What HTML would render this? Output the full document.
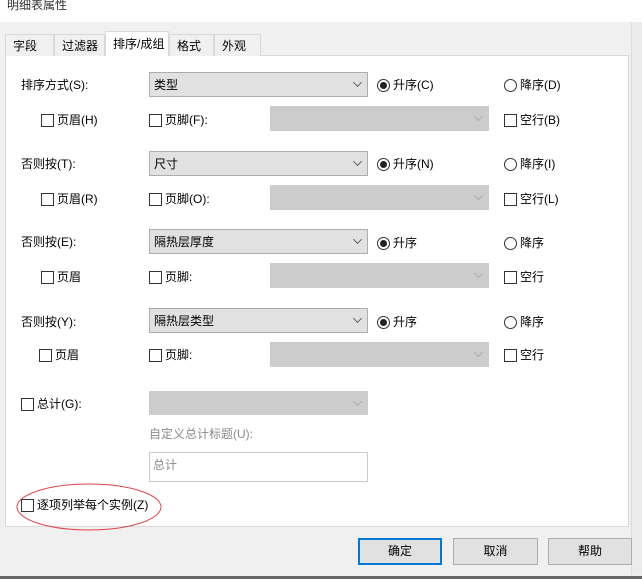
<!DOCTYPE html>
<html><head><meta charset="utf-8"><style>
*{box-sizing:border-box;margin:0;padding:0}
body{width:642px;height:579px;background:#f0f0f0;position:relative;overflow:hidden;font-family:"Liberation Sans","Noto Sans CJK SC",sans-serif;font-size:12px;color:#000}
.a{position:absolute;white-space:nowrap;line-height:14px}
.cb{position:absolute;width:13px;height:13px;border:1px solid #333;background:#fff}
.rb{position:absolute;width:13px;height:13px;border:1px solid #333;border-radius:50%;background:#fff}
.rb.on::after{content:"";position:absolute;left:2px;top:2px;width:7px;height:7px;border-radius:50%;background:#222}
.cmb{position:absolute;height:25px;border:1px solid #adadad;background:#e1e1e1;padding:5px 0 0 4px;line-height:14px}
.cmb.d{background:#cccccc;border-color:#cccccc}
.arr{position:absolute;right:6px;top:6px;width:7px;height:7px;border-right:1px solid #555;border-bottom:1px solid #555;transform:rotate(45deg) scale(.9)}
.d .arr{border-color:#aaa}
.tab{position:absolute;top:34px;height:22px;border:1px solid #d9d9d9;border-bottom:none;background:#f0f0f0;padding:4px 0 0 7px;line-height:14px}
.btn{position:absolute;top:538px;height:27px;border:1px solid #adadad;background:#e1e1e1;text-align:center;line-height:25px}
</style></head><body>
<div style="position:absolute;left:0;top:0;width:642px;height:22px;background:#fff"></div>
<div class="a" style="left:7px;top:-2px;color:#333">明细表属性</div>
<div style="position:absolute;left:631px;top:22px;width:11px;height:553px;background:#ececec;border-left:1px solid #ddd"></div>
<div style="position:absolute;left:5px;top:55px;width:624px;height:472px;background:#fff;border:1px solid #d9d9d9"></div>
<div class="tab" style="left:5px;width:49px">字段</div>
<div class="tab" style="left:54px;width:51px">过滤器</div>
<div class="tab" style="left:105px;width:64px;top:31px;height:25px;background:#fff;padding-top:5px">排序/成组</div>
<div class="tab" style="left:169px;width:45px">格式</div>
<div class="tab" style="left:214px;width:47px">外观</div>

<div class="a" style="left:21px;top:78px">排序方式(S):</div>
<div class="cmb" style="left:149px;top:72px;width:219px">类型<div class="arr"></div></div>
<div class="rb on" style="left:377px;top:79px"></div><div class="a" style="left:393px;top:78px">升序(C)</div>
<div class="rb" style="left:504px;top:79px"></div><div class="a" style="left:520px;top:78px">降序(D)</div>
<div class="cb" style="left:41px;top:114px"></div><div class="a" style="left:57px;top:113px">页眉(H)</div>
<div class="cb" style="left:149px;top:114px"></div><div class="a" style="left:165px;top:113px">页脚(F):</div>
<div class="cmb d" style="left:270px;top:106px;width:219px"><div class="arr"></div></div>
<div class="cb" style="left:504px;top:114px"></div><div class="a" style="left:520px;top:113px">空行(B)</div>

<div class="a" style="left:21px;top:157px">否则按(T):</div>
<div class="cmb" style="left:149px;top:151px;width:219px">尺寸<div class="arr"></div></div>
<div class="rb on" style="left:377px;top:158px"></div><div class="a" style="left:393px;top:157px">升序(N)</div>
<div class="rb" style="left:504px;top:158px"></div><div class="a" style="left:520px;top:157px">降序(I)</div>
<div class="cb" style="left:41px;top:193px"></div><div class="a" style="left:57px;top:192px">页眉(R)</div>
<div class="cb" style="left:149px;top:193px"></div><div class="a" style="left:165px;top:192px">页脚(O):</div>
<div class="cmb d" style="left:270px;top:185px;width:219px"><div class="arr"></div></div>
<div class="cb" style="left:504px;top:193px"></div><div class="a" style="left:520px;top:192px">空行(L)</div>

<div class="a" style="left:21px;top:235px">否则按(E):</div>
<div class="cmb" style="left:149px;top:229px;width:219px">隔热层厚度<div class="arr"></div></div>
<div class="rb on" style="left:377px;top:237px"></div><div class="a" style="left:393px;top:236px">升序</div>
<div class="rb" style="left:504px;top:237px"></div><div class="a" style="left:520px;top:236px">降序</div>
<div class="cb" style="left:41px;top:271px"></div><div class="a" style="left:57px;top:270px">页眉</div>
<div class="cb" style="left:149px;top:271px"></div><div class="a" style="left:165px;top:270px">页脚:</div>
<div class="cmb d" style="left:270px;top:263px;width:219px"><div class="arr"></div></div>
<div class="cb" style="left:504px;top:271px"></div><div class="a" style="left:520px;top:270px">空行</div>

<div class="a" style="left:21px;top:315px">否则按(Y):</div>
<div class="cmb" style="left:149px;top:308px;width:219px">隔热层类型<div class="arr"></div></div>
<div class="rb on" style="left:377px;top:316px"></div><div class="a" style="left:393px;top:315px">升序</div>
<div class="rb" style="left:504px;top:316px"></div><div class="a" style="left:520px;top:315px">降序</div>
<div class="cb" style="left:39px;top:349px"></div><div class="a" style="left:55px;top:348px">页眉</div>
<div class="cb" style="left:149px;top:349px"></div><div class="a" style="left:165px;top:348px">页脚:</div>
<div class="cmb d" style="left:270px;top:342px;width:219px"><div class="arr"></div></div>
<div class="cb" style="left:504px;top:349px"></div><div class="a" style="left:520px;top:348px">空行</div>

<div class="cb" style="left:21px;top:398px"></div><div class="a" style="left:37px;top:397px">总计(G):</div>
<div class="cmb d" style="left:149px;top:391px;width:219px;height:24px"><div class="arr"></div></div>
<div class="a" style="left:149px;top:427px;color:#8a8a8a">自定义总计标题(U):</div>
<div style="position:absolute;left:149px;top:452px;width:219px;height:30px;border:1px solid #ccc;background:#fff"></div>
<div class="a" style="left:153px;top:458px;color:#8a8a8a">总计</div>

<div class="cb" style="left:21px;top:499px"></div><div class="a" style="left:37px;top:498px">逐项列举每个实例(Z)</div>
<svg style="position:absolute;left:0;top:480px" width="170" height="56"><ellipse cx="89" cy="27" rx="72" ry="23" fill="none" stroke="#e0404a" stroke-width="1"/></svg>

<div class="btn" style="left:358px;width:84px;border:2px solid #0078d7;line-height:23px">确定</div>
<div class="btn" style="left:453px;width:85px">取消</div>
<div class="btn" style="left:548px;width:84px">帮助</div>
<div style="position:absolute;left:0;top:576px;width:642px;height:3px;background:#666"></div>
</body></html>
